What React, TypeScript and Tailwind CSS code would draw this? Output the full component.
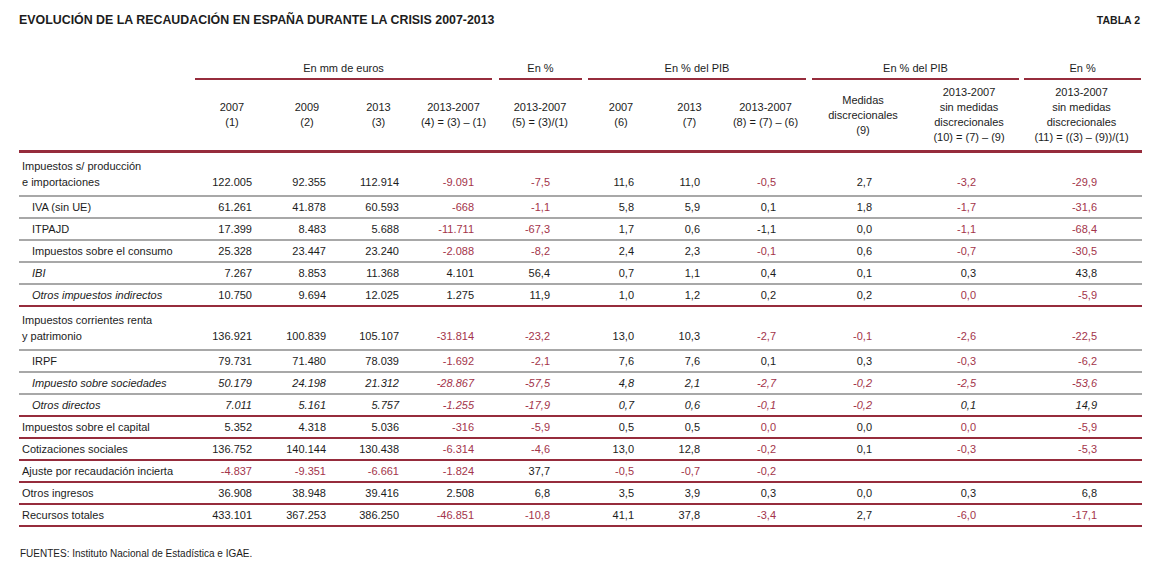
const RED_LINE = 'border-[#962c3c]';
const GRAY_LINE = 'border-[#a8a8a8]';

// right padding per numeric column, so numbers sit where the source table puts them
const pads = [
  'pr-[17px]',
  'pr-[19px]',
  'pr-[13px]',
  'pr-[21px]',
  'pr-[35px]',
  'pr-[23px]',
  'pr-[22px]',
  'pr-[33px]',
  'pr-[45px]',
  'pr-[45px]',
  'pr-[45px]',
];

const widths = [
  'w-[176px]',
  'w-[74px]',
  'w-[76px]',
  'w-[67px]',
  'w-[83px]',
  'w-[90px]',
  'w-[72px]',
  'w-[65px]',
  'w-[87px]',
  'w-[108px]',
  'w-[104px]',
  'w-[121px]',
];

type Row = {
  label: string[];
  sub?: boolean;
  italic?: 'label' | 'all';
  line: 'gray' | 'red';
  values: string[];
  reds: string;
};

const rows: Row[] = [
  {
    label: ['Impuestos s/ producción', 'e importaciones'],
    line: 'gray',
    values: ['122.005', '92.355', '112.914', '-9.091', '-7,5', '11,6', '11,0', '-0,5', '2,7', '-3,2', '-29,9'],
    reds: '00011001011',
  },
  {
    label: ['IVA (sin UE)'],
    sub: true,
    line: 'gray',
    values: ['61.261', '41.878', '60.593', '-668', '-1,1', '5,8', '5,9', '0,1', '1,8', '-1,7', '-31,6'],
    reds: '00011000011',
  },
  {
    label: ['ITPAJD'],
    sub: true,
    line: 'gray',
    values: ['17.399', '8.483', '5.688', '-11.711', '-67,3', '1,7', '0,6', '-1,1', '0,0', '-1,1', '-68,4'],
    reds: '00011000011',
  },
  {
    label: ['Impuestos sobre el consumo'],
    sub: true,
    line: 'gray',
    values: ['25.328', '23.447', '23.240', '-2.088', '-8,2', '2,4', '2,3', '-0,1', '0,6', '-0,7', '-30,5'],
    reds: '00011001011',
  },
  {
    label: ['IBI'],
    sub: true,
    italic: 'label',
    line: 'gray',
    values: ['7.267', '8.853', '11.368', '4.101', '56,4', '0,7', '1,1', '0,4', '0,1', '0,3', '43,8'],
    reds: '00000000000',
  },
  {
    label: ['Otros impuestos indirectos'],
    sub: true,
    italic: 'label',
    line: 'red',
    values: ['10.750', '9.694', '12.025', '1.275', '11,9', '1,0', '1,2', '0,2', '0,2', '0,0', '-5,9'],
    reds: '00000000011',
  },
  {
    label: ['Impuestos corrientes renta', 'y patrimonio'],
    line: 'gray',
    values: ['136.921', '100.839', '105.107', '-31.814', '-23,2', '13,0', '10,3', '-2,7', '-0,1', '-2,6', '-22,5'],
    reds: '00011001111',
  },
  {
    label: ['IRPF'],
    sub: true,
    line: 'gray',
    values: ['79.731', '71.480', '78.039', '-1.692', '-2,1', '7,6', '7,6', '0,1', '0,3', '-0,3', '-6,2'],
    reds: '00011000011',
  },
  {
    label: ['Impuesto sobre sociedades'],
    sub: true,
    italic: 'all',
    line: 'gray',
    values: ['50.179', '24.198', '21.312', '-28.867', '-57,5', '4,8', '2,1', '-2,7', '-0,2', '-2,5', '-53,6'],
    reds: '00011001111',
  },
  {
    label: ['Otros directos'],
    sub: true,
    italic: 'all',
    line: 'red',
    values: ['7.011', '5.161', '5.757', '-1.255', '-17,9', '0,7', '0,6', '-0,1', '-0,2', '0,1', '14,9'],
    reds: '00011001100',
  },
  {
    label: ['Impuestos sobre el capital'],
    line: 'red',
    values: ['5.352', '4.318', '5.036', '-316', '-5,9', '0,5', '0,5', '0,0', '0,0', '0,0', '-5,9'],
    reds: '00011001011',
  },
  {
    label: ['Cotizaciones sociales'],
    line: 'red',
    values: ['136.752', '140.144', '130.438', '-6.314', '-4,6', '13,0', '12,8', '-0,2', '0,1', '-0,3', '-5,3'],
    reds: '00011001011',
  },
  {
    label: ['Ajuste por recaudación incierta'],
    line: 'red',
    values: ['-4.837', '-9.351', '-6.661', '-1.824', '37,7', '-0,5', '-0,7', '-0,2', '', '', ''],
    reds: '11110111000',
  },
  {
    label: ['Otros ingresos'],
    line: 'red',
    values: ['36.908', '38.948', '39.416', '2.508', '6,8', '3,5', '3,9', '0,3', '0,0', '0,3', '6,8'],
    reds: '00000000000',
  },
  {
    label: ['Recursos totales'],
    line: 'red',
    values: ['433.101', '367.253', '386.250', '-46.851', '-10,8', '41,1', '37,8', '-3,4', '2,7', '-6,0', '-17,1'],
    reds: '00011001011',
  },
];

const groups = [
  { title: 'En mm de euros', span: 4, line: 'ml-0 mr-[3px]' },
  { title: 'En %', span: 1, line: 'ml-[4px] mr-[3px]' },
  { title: 'En % del PIB', span: 3, line: 'ml-[3px] mr-[3px]' },
  { title: 'En % del PIB', span: 2, line: 'ml-[3px] mr-[2px]' },
  { title: 'En %', span: 1, line: 'ml-[3px] mr-[1px]' },
];

const heads: string[][] = [
  ['2007', '(1)'],
  ['2009', '(2)'],
  ['2013', '(3)'],
  ['2013-2007', '(4) = (3) – (1)'],
  ['2013-2007', '(5) = (3)/(1)'],
  ['2007', '(6)'],
  ['2013', '(7)'],
  ['2013-2007', '(8) = (7) – (6)'],
  ['Medidas', 'discrecionales', '(9)'],
  ['2013-2007', 'sin medidas', 'discrecionales', '(10) = (7) – (9)'],
  ['2013-2007', 'sin medidas', 'discrecionales', '(11) = ((3) – (9))/(1)'],
];

function DataRow({ row }: { row: Row }) {
  const line = row.line === 'red' ? RED_LINE : GRAY_LINE;
  const tall = row.label.length > 1;
  const italicAll = row.italic === 'all';
  return (
    <tr>
      <td
        className={`border-b-2 ${line} ${row.sub ? 'pl-[13px]' : 'pl-[3px]'} ${
          tall ? 'pt-[5px] pb-[5px] leading-[16px]' : 'h-[20px] leading-[20px]'
        } ${row.italic ? 'italic' : ''} align-bottom`}
      >
        {row.label.map((l) => (
          <div key={l}>{l}</div>
        ))}
      </td>
      {row.values.map((v, i) => (
        <td
          key={i}
          className={`border-b-2 ${line} ${pads[i]} text-right align-bottom ${
            tall ? 'pb-[5px] leading-[16px]' : 'leading-[20px]'
          } ${row.reds[i] === '1' ? 'text-[#a3344a]' : ''} ${italicAll ? 'italic' : ''}`}
        >
          {v}
        </td>
      ))}
    </tr>
  );
}

export default function App() {
  return (
    <div className="w-[1159px] h-[573px] bg-white font-['Liberation_Sans',Arial,sans-serif] text-[#1c1c1c]">
      <div className="ml-[19px] w-[1123px] pt-[13px]">
        <div className="flex items-center justify-between leading-[15px]">
          <h1 className="text-[12.4px] font-bold">
            EVOLUCIÓN DE LA RECAUDACIÓN EN ESPAÑA DURANTE LA CRISIS 2007-2013
          </h1>
          <span className="text-[10.5px] font-bold pr-[2px]">TABLA 2</span>
        </div>

        <table className="mt-[33px] w-[1123px] table-fixed border-separate border-spacing-0 text-[11px]">
          <colgroup>
            {widths.map((w, i) => (
              <col key={i} className={w} />
            ))}
          </colgroup>
          <thead>
            <tr>
              <th />
              {groups.map((g, i) => (
                <th key={i} colSpan={g.span} className="p-0 font-normal">
                  <div className={`leading-[14px] pb-[3px] border-b-2 ${RED_LINE} ${g.line}`}>
                    {g.title}
                  </div>
                </th>
              ))}
            </tr>
            <tr>
              <th className={`h-[73px] border-b-[3px] ${RED_LINE}`} />
              {heads.map((h, i) => (
                <th
                  key={i}
                  className={`h-[73px] border-b-[3px] ${RED_LINE} font-normal leading-[15px] align-middle text-center whitespace-nowrap`}
                >
                  {h.map((t) => (
                    <div key={t}>{t}</div>
                  ))}
                </th>
              ))}
            </tr>
          </thead>
          <tbody>
            {rows.map((r) => (
              <DataRow key={r.label.join(' ')} row={r} />
            ))}
          </tbody>
        </table>

        <p className="mt-[21px] text-[10px] leading-[12px] pl-[1px]">
          FUENTES: Instituto Nacional de Estadística e IGAE.
        </p>
      </div>
    </div>
  );
}
